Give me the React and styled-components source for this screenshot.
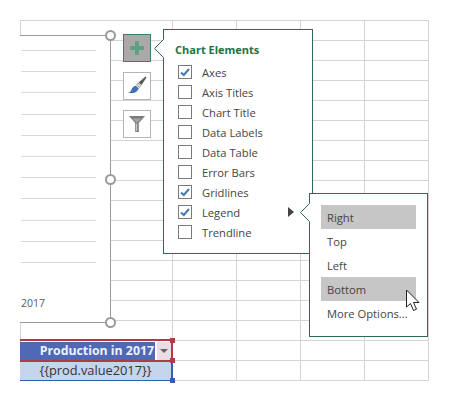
import React from "react";
import styled, { createGlobalStyle } from "styled-components";

const GlobalStyle = createGlobalStyle`
  html, body { margin: 0; padding: 0; background: #fff; }
  body { font-family: "Open Sans", "Liberation Sans", Arial, sans-serif; }
  * { box-sizing: border-box; }
`;

const GREEN = "#2f6b52";
const RED = "#b23a48";
const BLUE = "#2f5fae";

const Page = styled.div`
  position: relative;
  width: 449px;
  height: 401px;
  padding: 20px 0 0 20px;
  overflow: hidden;
  background: #fff;
`;

const Sheet = styled.div`
  display: grid;
  grid-template-columns: 152px repeat(4, 64px);
  grid-auto-rows: 20px;
  width: 409px;
  border-top: 1px solid #d4d4d4;
  border-left: 1px solid #d4d4d4;
`;

const Cell = styled.div`
  border-right: 1px solid #d4d4d4;
  border-bottom: 1px solid #d4d4d4;
`;

const Chart = styled.div`
  position: absolute;
  left: 20px;
  top: 35px;
  width: 91px;
  height: 288px;
  display: flex;
  flex-direction: column;
  padding: 14px 0 12px 1px;
  background: #fff;
  border-top: 1px solid #9a9a9a;
  border-right: 1px solid #9a9a9a;
  border-bottom: 1px solid #9a9a9a;
`;

const ChartLine = styled.div`
  width: 75px;
  height: 21.2px;
  flex: none;
  border-top: 1px solid #d9d9d9;
`;

const YearLabel = styled.div`
  margin-top: auto;
  font-size: 10.5px;
  color: #595959;
`;

const HandleColumn = styled.div`
  position: absolute;
  right: -6px;
  top: -6px;
  bottom: -6px;
  display: flex;
  flex-direction: column;
  justify-content: space-between;
`;

const Handle = styled.div`
  width: 11px;
  height: 11px;
  border-radius: 50%;
  background: #fff;
  border: 2px solid #9a9a9a;
`;

const ToolRail = styled.div`
  position: absolute;
  left: 123px;
  top: 34px;
  display: flex;
  flex-direction: column;
  gap: 10px;
`;

const ToolButton = styled.div`
  width: 28px;
  height: 28px;
  display: flex;
  align-items: center;
  justify-content: center;
  background: ${({ $active }) => ($active ? "#a9a9a9" : "#fff")};
  border: 1px solid ${({ $active }) => ($active ? "#3f7f62" : "#b5b5b5")};
`;

const ElementsPanel = styled.div`
  position: absolute;
  left: 163px;
  top: 29px;
  width: 150px;
  height: 225px;
  padding: 13px 0 0 11px;
  background: #fff;
  border: 1px solid ${GREEN};
`;

const PanelTitle = styled.div`
  font-size: 11px;
  font-weight: 700;
  line-height: 14px;
  color: #217346;
  margin-bottom: 5px;
`;

const ElementRow = styled.div`
  display: flex;
  align-items: center;
  gap: 10px;
  height: 20px;
  padding: 0 18px 0 3px;
  font-size: 11.2px;
  color: #444;
`;

const CheckBox = styled.div`
  width: 14px;
  height: 14px;
  flex: none;
  display: flex;
  align-items: center;
  justify-content: center;
  background: #fff;
  border: 1px solid #7a7a7a;
`;

const Callout = styled.svg`
  position: absolute;
  left: -11px;
  top: ${({ $top }) => $top}px;
`;

const MoreArrow = styled.div`
  margin-left: auto;
  width: 0;
  height: 0;
  border-left: 6px solid #444;
  border-top: 5px solid transparent;
  border-bottom: 5px solid transparent;
`;

const SubPanel = styled.div`
  position: absolute;
  left: 309px;
  top: 193px;
  width: 119px;
  height: 144px;
  padding: 11px 11px 0;
  background: #fff;
  border: 1px solid ${GREEN};
`;

const SubItem = styled.div`
  height: 24px;
  padding: 1px 0 0 6px;
  line-height: 23px;
  font-size: 11.2px;
  color: #444;
  background: ${({ $hover }) => ($hover ? "#c6c6c6" : "transparent")};
`;

const Pointer = styled.svg`
  position: absolute;
  right: 6px;
  bottom: 23px;
`;

const DataTable = styled.div`
  position: absolute;
  left: 20px;
  top: 339px;
  width: 153px;
  display: flex;
  flex-direction: column;
`;

const TableHeader = styled.div`
  height: 23px;
  display: flex;
  align-items: center;
  padding-top: 1px;
  border-top: 2px solid ${RED};
  border-bottom: 2px solid ${RED};
  border-right: 2px solid ${RED};
`;

const HeaderText = styled.div`
  flex: 1;
  height: 100%;
  padding-right: 1px;
  text-align: right;
  line-height: 18px;
  font-size: 12.3px;
  font-weight: 700;
  white-space: nowrap;
  color: #eef1fa;
  background: #4f69b5;
`;

const DropButton = styled.div`
  width: 14px;
  height: 100%;
  margin-left: 2px;
  display: flex;
  align-items: center;
  justify-content: center;
  background: #eadde3;
`;

const DropArrow = styled.div`
  width: 0;
  height: 0;
  border-top: 4px solid #666;
  border-left: 4px solid transparent;
  border-right: 4px solid transparent;
`;

const TableRow = styled.div`
  height: 19px;
  text-align: center;
  line-height: 17px;
  font-size: 12.800px;
  color: #333;
  background: #c6d4ec;
  border-bottom: 1px solid ${BLUE};
  border-right: 2px solid ${BLUE};
`;

const CornerMark = styled.div`
  position: absolute;
  right: -2px;
  top: ${({ $top }) => $top}px;
  width: 5px;
  height: 5px;
  background: ${({ $color }) => $color};
`;

const ELEMENTS = [
  ["Axes", true],
  ["Axis Titles", false],
  ["Chart Title", false],
  ["Data Labels", false],
  ["Data Table", false],
  ["Error Bars", false],
  ["Gridlines", true],
  ["Legend", true, true],
  ["Trendline", false],
];

const SUB_ITEMS = [
  ["Right", true],
  ["Top", false],
  ["Left", false],
  ["Bottom", true],
  ["More Options...", false],
];

const PlusIcon = () => (
  <svg width="14" height="14" viewBox="0 0 14 14">
    <path d="M5 0h4v5h5v4H9v5H5V9H0V5h5z" fill="#5f9f82" />
  </svg>
);

const BrushIcon = () => (
  <svg width="22" height="22" viewBox="0 0 22 22">
    <path d="M19.500 1.500l1 1-5 7.500-3-2.500z" fill="#5a5a5a" />
    <path d="M12 8l3 2.500-1.500 2-3-2.500z" fill="#dcdcdc" stroke="#777" strokeWidth=".6" />
    <path d="M9.800 10.800l3 2.400c-.8 2.600-3 4.300-5.300 4.800H1.500c2.500-.6 3.300-1.800 4-3.500.7-1.900 2.500-3.700 4.300-3.700z" fill="#3f74b5" />
  </svg>
);

const FilterIcon = () => (
  <svg width="18" height="18" viewBox="0 0 18 18">
    <path d="M1 1h16l-6.200 7v9H7.200V8z" fill="#7b7b7b" />
    <path d="M4.500 3.500L9 8l4.500-4.500z" fill="#a5a5a5" />
    <path d="M8 8.500h1.200V16H8z" fill="#c9c9c9" />
  </svg>
);

const CheckIcon = () => (
  <svg width="12" height="12" viewBox="0 0 12 12">
    <path d="M2 6.500L4.800 9 10 3" fill="none" stroke="#4a78b0" strokeWidth="2" />
  </svg>
);

const CalloutTip = ({ top }) => (
  <Callout $top={top} width="11" height="22" viewBox="0 0 11 22">
    <path d="M11 1L1.500 10.500 11 20z" fill="#fff" />
    <path d="M10.500 1.500L1.500 10.500 10.500 19.500" fill="none" stroke={GREEN} strokeWidth="1" />
  </Callout>
);

const CursorIcon = () => (
  <Pointer width="16" height="24" viewBox="0 0 16 24">
    <path d="M1.500 1v17l4-3.500 3 7 3-1.300-3-6.700h5.500z" fill="#fff" stroke="#222" strokeWidth="1" />
  </Pointer>
);

export default function App() {
  return (
    <Page>
      <GlobalStyle />
      <Sheet>
        {Array.from({ length: 18 * 5 }).map((_, i) => (
          <Cell key={i} />
        ))}
      </Sheet>

      <Chart>
        {Array.from({ length: 11 }).map((_, i) => (
          <ChartLine key={i} />
        ))}
        <YearLabel>2017</YearLabel>
        <HandleColumn>
          <Handle />
          <Handle />
          <Handle />
        </HandleColumn>
      </Chart>

      <ToolRail>
        <ToolButton $active>
          <PlusIcon />
        </ToolButton>
        <ToolButton>
          <BrushIcon />
        </ToolButton>
        <ToolButton>
          <FilterIcon />
        </ToolButton>
      </ToolRail>

      <ElementsPanel>
        <CalloutTip top={8} />
        <PanelTitle>Chart Elements</PanelTitle>
        {ELEMENTS.map(([label, checked, more]) => (
          <ElementRow key={label}>
            <CheckBox>{checked && <CheckIcon />}</CheckBox>
            {label}
            {more && <MoreArrow />}
          </ElementRow>
        ))}
      </ElementsPanel>

      <SubPanel>
        <CalloutTip top={8} />
        {SUB_ITEMS.map(([label, hover]) => (
          <SubItem key={label} $hover={hover}>
            {label}
          </SubItem>
        ))}
        <CursorIcon />
      </SubPanel>

      <DataTable>
        <TableHeader>
          <HeaderText>Production in 2017</HeaderText>
          <DropButton>
            <DropArrow />
          </DropButton>
        </TableHeader>
        <TableRow>{"{{prod.value2017}}"}</TableRow>
        <CornerMark $top={-1} $color={RED} />
        <CornerMark $top={19} $color={RED} />
        <CornerMark $top={39} $color={BLUE} />
      </DataTable>
    </Page>
  );
}
